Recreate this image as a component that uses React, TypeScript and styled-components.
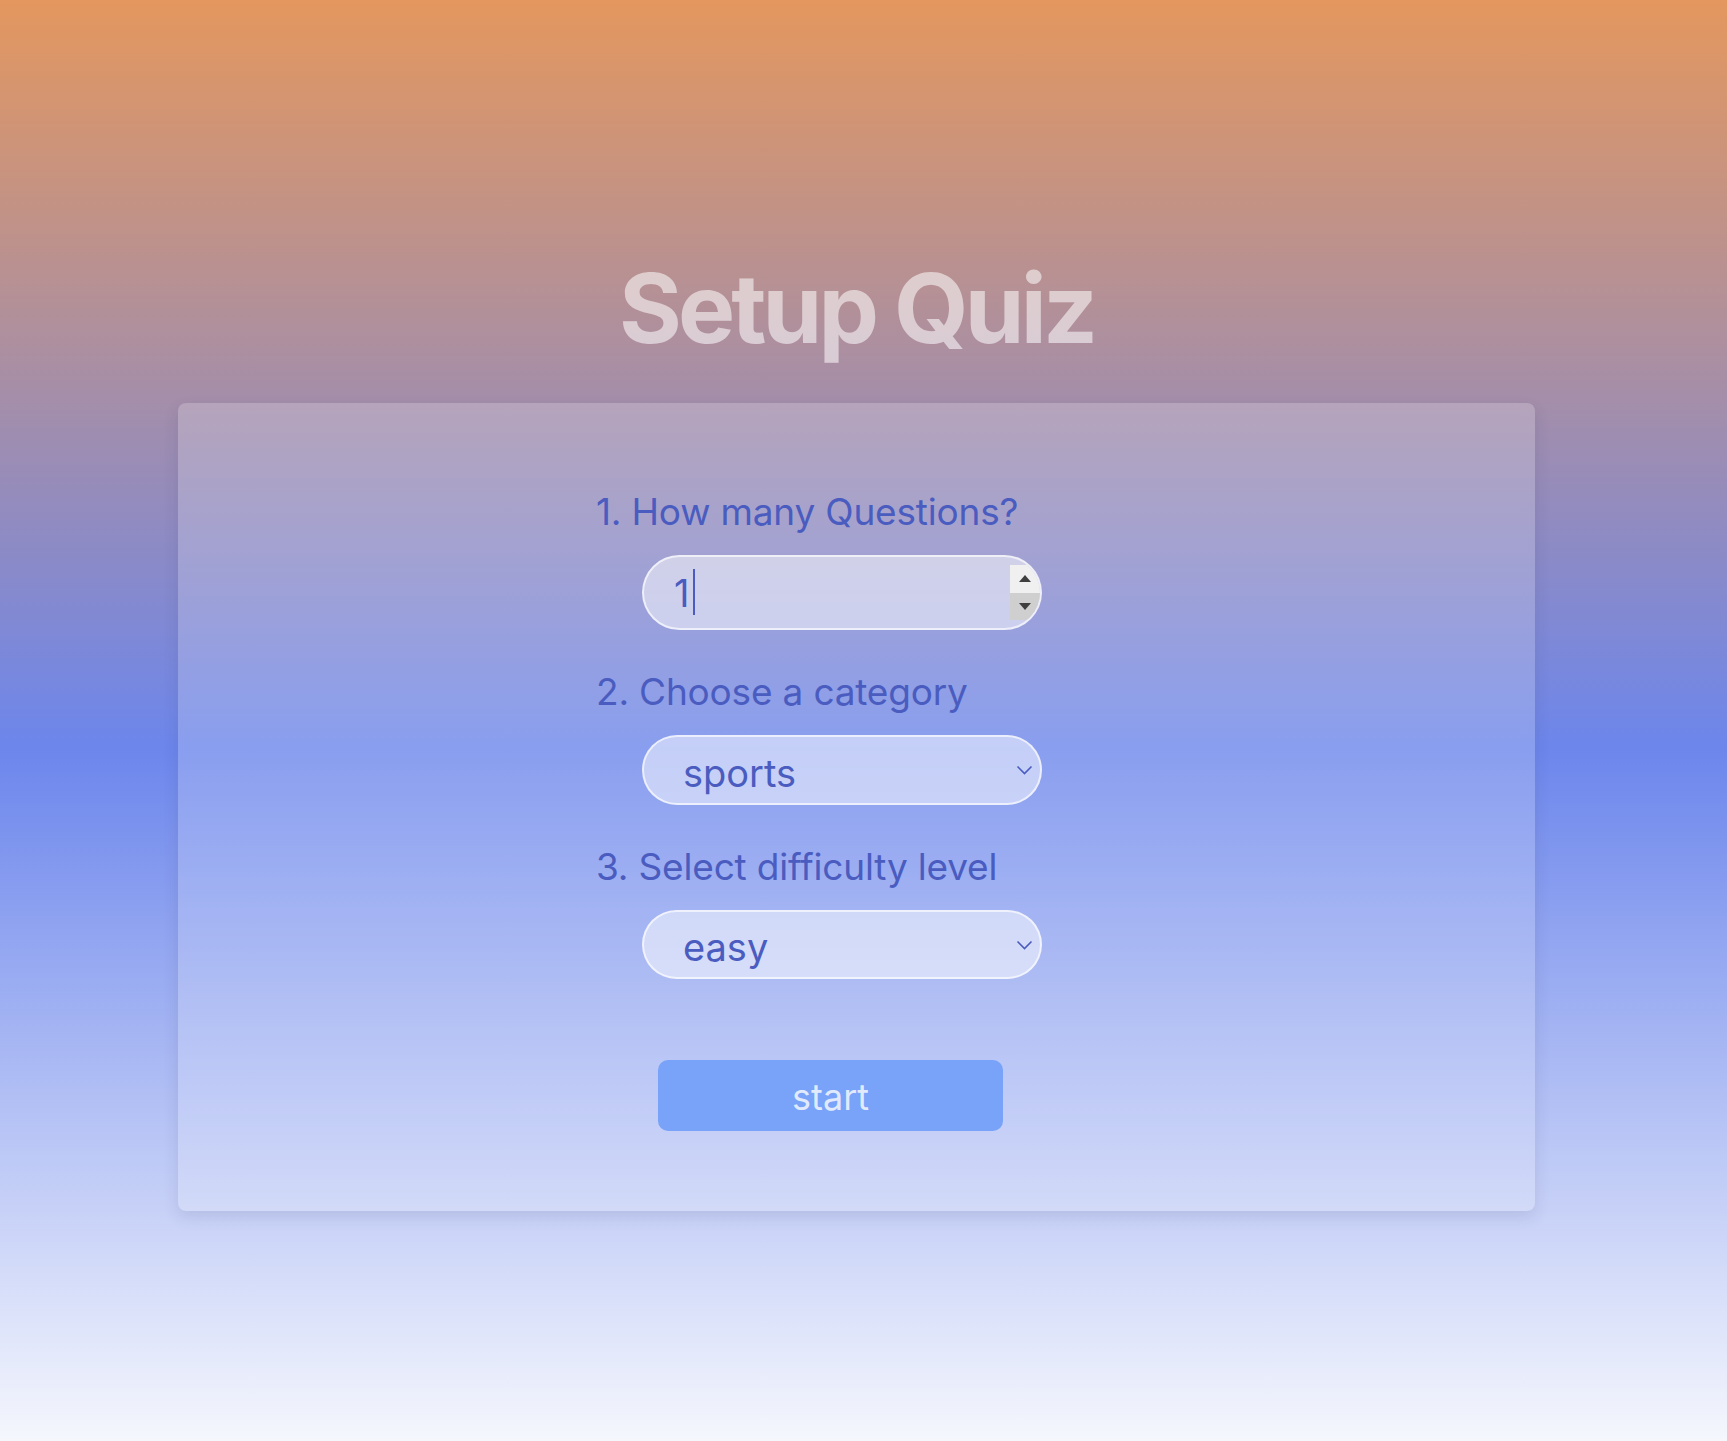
import React from "react";
import styled, { createGlobalStyle } from "styled-components";

const GlobalStyle = createGlobalStyle`
  html, body { margin: 0; padding: 0; }
  body {
    min-height: 100vh;
    font-family: Inter, "Noto Sans", sans-serif;
    background: linear-gradient(to bottom, #e4975e 0%, #6c86ec 52%, #f5f7fd 100%);
  }
  * { box-sizing: border-box; }
`;

const Page = styled.main`
  display: flex;
  flex-direction: column;
  padding: 250px 192px 0 178px;
`;

const Title = styled.h1`
  margin: 0 0 37px;
  text-align: center;
  font-size: 96px;
  line-height: 116px;
  font-weight: 700;
  letter-spacing: -0.04em;
  color: rgba(255, 255, 255, 0.55);
`;

const Card = styled.section`
  padding: 86px 0 80px 418px;
  border-radius: 8px;
  background: rgba(255, 255, 255, 0.2);
  box-shadow: 0 6px 16px rgba(40, 40, 90, 0.12);
`;

const Form = styled.form`
  display: flex;
  flex-direction: column;
  align-items: flex-start;
  gap: 39px;
`;

const Group = styled.div`
  display: flex;
  flex-direction: column;
  align-items: flex-start;
  gap: 21px;
`;

const Label = styled.label`
  font-size: 37px;
  line-height: 45px;
  letter-spacing: -0.005em;
  color: #4a5cbf;
`;

const Field = styled.div<{ $h: number }>`
  position: relative;
  margin-left: 46px;
  width: 400px;
  height: ${(p) => p.$h}px;
  border: 2px solid rgba(255, 255, 255, 0.65);
  border-radius: 999px;
  background: rgba(255, 255, 255, 0.5);
  overflow: hidden;
`;

const NumberInput = styled.input`
  width: 100%;
  height: 100%;
  padding: 0 40px 0 30px;
  border: none;
  outline: none;
  background: transparent;
  font-family: inherit;
  font-size: 38px;
  color: #4a5cbf;
  -moz-appearance: textfield;
  &::-webkit-inner-spin-button,
  &::-webkit-outer-spin-button {
    -webkit-appearance: none;
    margin: 0;
  }
`;

const Caret = styled.span`
  position: absolute;
  left: 49px;
  top: 12px;
  width: 2px;
  height: 46px;
  background: #4a5cbf;
`;

const Spinner = styled.div`
  position: absolute;
  right: 0;
  top: 8px;
  width: 30px;
  height: 55px;
  display: flex;
  flex-direction: column;
`;

const SpinHalf = styled.div<{ $down?: boolean }>`
  flex: 1;
  display: flex;
  align-items: center;
  justify-content: center;
  background: ${(p) => (p.$down ? "#cfcfcf" : "#f0f0f0")};
`;

const Select = styled.select`
  width: 100%;
  height: 100%;
  padding: 5px 40px 0 39px;
  border: none;
  outline: none;
  background: transparent;
  appearance: none;
  -webkit-appearance: none;
  font-family: inherit;
  font-size: 38px;
  color: #4a5cbf;
`;

const Chevron = styled.svg`
  position: absolute;
  right: 7px;
  top: 50%;
  margin-top: -5px;
  pointer-events: none;
`;

const StartButton = styled.button`
  margin-top: 42px;
  margin-left: 62px;
  width: 345px;
  height: 71px;
  padding-top: 3px;
  border: none;
  border-radius: 10px;
  background: #78a3f8;
  font-family: inherit;
  font-size: 36px;
  color: rgba(255, 255, 255, 0.78);
  cursor: pointer;
`;

const Triangle = ({ down }: { down?: boolean }) => (
  <svg width="14" height="9" viewBox="0 0 14 9">
    <path d={down ? "M1 1 L13 1 L7 8 Z" : "M1 8 L13 8 L7 1 Z"} fill="#3f3f3f" />
  </svg>
);

const ChevronIcon = () => (
  <Chevron width="17" height="10" viewBox="0 0 17 10">
    <path d="M1.5 1.5 L8.5 8.5 L15.5 1.5" fill="none" stroke="#4a5cbf" strokeWidth="1.6" />
  </Chevron>
);

export default function App() {
  return (
    <>
      <GlobalStyle />
      <Page>
        <Title>Setup Quiz</Title>
        <Card>
          <Form onSubmit={(e) => e.preventDefault()}>
            <Group>
              <Label htmlFor="amount">1. How many Questions?</Label>
              <Field $h={75}>
                <NumberInput id="amount" type="number" defaultValue={1} min={1} />
                <Caret />
                <Spinner>
                  <SpinHalf>
                    <Triangle />
                  </SpinHalf>
                  <SpinHalf $down>
                    <Triangle down />
                  </SpinHalf>
                </Spinner>
              </Field>
            </Group>
            <Group>
              <Label htmlFor="category">2. Choose a category</Label>
              <Field $h={70}>
                <Select id="category" defaultValue="sports">
                  <option value="sports">sports</option>
                  <option value="history">history</option>
                  <option value="politics">politics</option>
                </Select>
                <ChevronIcon />
              </Field>
            </Group>
            <Group>
              <Label htmlFor="difficulty">3. Select difficulty level</Label>
              <Field $h={69}>
                <Select id="difficulty" defaultValue="easy">
                  <option value="easy">easy</option>
                  <option value="medium">medium</option>
                  <option value="hard">hard</option>
                </Select>
                <ChevronIcon />
              </Field>
            </Group>
            <StartButton type="submit">start</StartButton>
          </Form>
        </Card>
      </Page>
    </>
  );
}
